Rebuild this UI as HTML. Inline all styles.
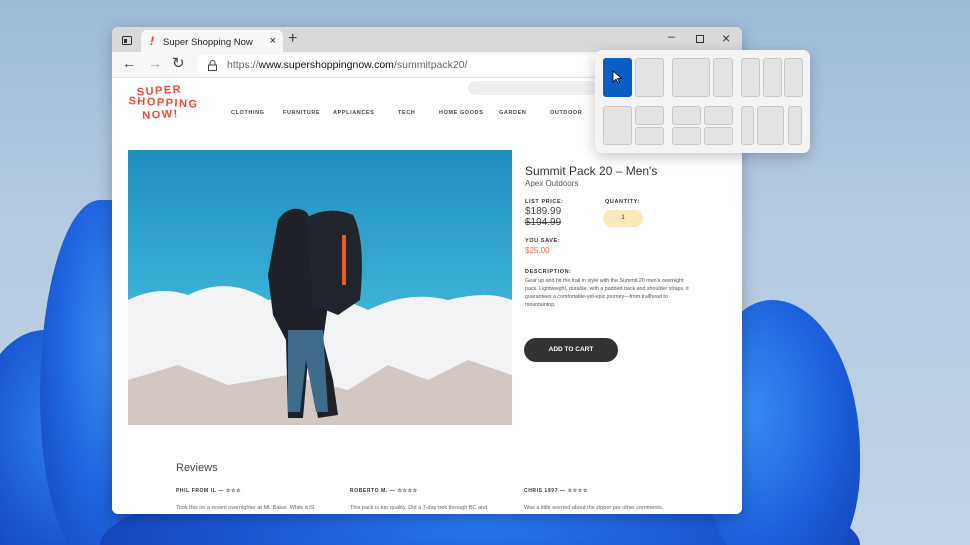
<!DOCTYPE html>
<html style="width:970px;height:545px;overflow:hidden"><head><style>
*{margin:0;padding:0;box-sizing:border-box}
body{width:970px;height:545px;overflow:hidden;position:relative;font-family:"Liberation Sans",sans-serif;
background:linear-gradient(180deg,#9fbbd8 0%,#b4cbe0 40%,#c1d3e4 100%)}
.abs{position:absolute}
.clip{position:absolute;left:0;top:0;width:970px;height:545px;overflow:hidden}
.bloomL{left:40px;top:200px;width:110px;height:360px;border-radius:60% 40% 30% 50%;background:radial-gradient(ellipse at 60% 40%,#3b8af0 0%,#1f64e0 50%,#1546b8 100%)}
.bloomL2{left:-30px;top:330px;width:150px;height:240px;border-radius:50%;background:radial-gradient(ellipse at 60% 40%,#2f7ef0 0%,#1a55d0 60%,#0f3aa8 100%)}
.bloomB{left:100px;top:470px;width:760px;height:150px;border-radius:50%;background:radial-gradient(ellipse at 50% 30%,#2a7af0 0%,#1a55d0 50%,#0d35a0 100%)}
.bloomR{left:700px;top:300px;width:160px;height:280px;border-radius:45% 55% 40% 50%;background:radial-gradient(ellipse at 30% 40%,#3a8cf5 0%,#1d5fdc 55%,#1240b0 100%)}
.win{left:112px;top:27px;width:630px;height:487px;background:#fff;border-radius:6px;overflow:hidden;box-shadow:0 4px 16px rgba(0,0,0,.25)}
.tabbar{height:25px;background:#d9d9d9;position:relative}
.tab{position:absolute;left:29px;top:3px;width:142px;height:22px;background:#f7f7f7;border-radius:6px 6px 0 0;font-size:9.5px;color:#222;padding:7px 0 0 22px}
.addr{height:26px;background:#f7f7f7;position:relative;border-bottom:1px solid #e2e2e2}
.url{position:absolute;left:86px;top:3px;width:500px;height:20px;background:#fff;border-radius:4px;font-size:10.5px;color:#666;padding:4px 0 0 29px}
.nav{position:absolute;top:110px;font-size:5.5px;letter-spacing:.6px;color:#444;font-weight:bold}
.snap{left:595px;top:50px;width:215px;height:103px;background:#f3f3f3;border-radius:7px;box-shadow:0 4px 14px rgba(0,0,0,.22)}
.c{position:absolute;background:#e3e3e3;border:1px solid #c8c8c8;border-radius:3px}
.lab{font-size:5.5px;font-weight:bold;letter-spacing:.6px;color:#333;position:absolute}
</style></head><body>
<div class="clip"><div class="abs bloomL2"></div><div class="abs bloomL"></div><div class="abs bloomB"></div><div class="abs bloomR"></div></div>
<div class="abs win">
 <div class="tabbar">
  <svg class="abs" style="left:10px;top:9px" width="10" height="9"><rect x=".5" y=".5" width="9" height="8" fill="none" stroke="#333" rx="1"/><rect x="2" y="3" width="3" height="4" fill="#333"/></svg>
  <div class="tab"><span style="position:absolute;left:9px;top:4px;color:#e8332a;font-weight:bold;font-size:12px;font-style:italic">!</span>Super Shopping Now<span style="position:absolute;right:7px;top:5px;font-size:11px">×</span></div>
  <div class="abs" style="left:176px;top:3px;font-size:16px;color:#444">+</div>
  <div class="abs" style="left:556px;top:2px;font-size:12px;color:#333">–</div>
  <div class="abs" style="left:584px;top:8px;width:8px;height:8px;border:1px solid #333"></div>
  <div class="abs" style="left:610px;top:3px;font-size:14px;color:#333">×</div>
 </div>
 <div class="addr">
  <div class="abs" style="left:10px;top:3px;font-size:14px;color:#333">←</div>
  <div class="abs" style="left:36px;top:3px;font-size:14px;color:#999">→</div>
  <div class="abs" style="left:60px;top:2px;font-size:15px;color:#444">↻</div>
  <div class="url"><svg class="abs" style="left:10px;top:5px" width="9" height="11"><path d="M2 5V3a2.5 2.5 0 0 1 5 0v2" fill="none" stroke="#444"/><rect x=".5" y="5" width="8" height="5.5" fill="none" stroke="#444"/></svg>https://<span style="color:#111">www.supershoppingnow.com</span>/summitpack20/</div>
 </div>
</div>
<div class="abs" style="left:468px;top:81px;width:140px;height:14px;background:#eee;border-radius:7px"></div>
<div class="abs" style="left:126px;top:85px;width:75px;font-weight:bold;color:#ec4a35;font-size:11px;line-height:12px;letter-spacing:1.5px;text-align:center">
 <div style="transform:rotate(-4deg);margin-left:-8px">SUPER</div><div style="transform:rotate(3deg)">SHOPPING</div><div style="transform:rotate(-3deg);margin-left:-6px">NOW!</div></div>
<div class="nav" style="left:231px">CLOTHING</div><div class="nav" style="left:283px">FURNITURE</div><div class="nav" style="left:333px">APPLIANCES</div><div class="nav" style="left:398px">TECH</div><div class="nav" style="left:439px">HOME GOODS</div><div class="nav" style="left:499px">GARDEN</div><div class="nav" style="left:550px">OUTDOOR</div>
<svg class="abs" style="left:128px;top:150px" width="384" height="275">
 <defs><linearGradient id="sky" x1="0" y1="0" x2="0" y2="1"><stop offset="0" stop-color="#1f8fc0"/><stop offset=".6" stop-color="#3fb3d8"/><stop offset="1" stop-color="#80cbe4"/></linearGradient></defs>
 <rect width="384" height="275" fill="url(#sky)"/>
 <path d="M0 150 Q30 135 60 145 Q100 125 140 150 Q200 140 240 160 Q280 140 320 150 Q360 140 384 150 V275 H0Z" fill="#f2f3f5"/>
 <path d="M0 230 L50 215 L100 235 L160 225 L220 240 L260 215 L300 230 L340 210 L384 225 V275 H0Z" fill="#c9bcb5" opacity=".8"/>
 <path d="M150 70 Q160 55 175 60 Q185 65 180 80 L195 80 L205 120 L195 190 L205 230 L210 265 L190 268 L180 210 L175 268 L160 268 L158 190 L145 165 L140 125 Z" fill="#1e2228"/>
 <path d="M160 180 L195 180 L200 262 L188 262 L178 210 L172 262 L160 262 Z" fill="#3f6c8a"/>
 <path d="M178 68 Q200 55 225 65 Q238 90 232 150 L210 165 L185 155 Z" fill="#20242c"/>
 <rect x="214" y="85" width="4" height="50" fill="#e8601c"/>
</svg>
<div class="abs" style="left:525px;top:164px;font-size:12px;color:#333">Summit Pack 20 – Men's</div>
<div class="abs" style="left:525px;top:179px;font-size:8px;color:#555">Apex Outdoors</div>
<div class="lab" style="left:525px;top:199px">LIST PRICE:</div>
<div class="abs" style="left:525px;top:206px;font-size:10px;color:#444">$189.99</div>
<div class="abs" style="left:525px;top:217px;font-size:10px;color:#444;text-decoration:line-through">$194.99</div>
<div class="lab" style="left:605px;top:199px">QUANTITY:</div>
<div class="abs" style="left:603px;top:210px;width:40px;height:17px;background:#fce7b8;border-radius:9px;font-size:6px;text-align:center;padding-top:5px;color:#333">1</div>
<div class="lab" style="left:525px;top:238px">YOU SAVE:</div>
<div class="abs" style="left:525px;top:246px;font-size:8px;color:#f06a4a">$25.00</div>
<div class="lab" style="left:525px;top:269px">DESCRIPTION:</div>
<div class="abs" style="left:525px;top:277px;width:165px;font-size:5.3px;line-height:8px;color:#555">Gear up and hit the trail in style with the Summit 20 men's overnight pack. Lightweight, durable, with a padded back and shoulder straps, it guarantees a comfortable-yet-epic journey—from trailhead to mountaintop.</div>
<div class="abs" style="left:524px;top:338px;width:94px;height:24px;background:#333;border-radius:12px;color:#fff;font-size:6.5px;font-weight:bold;text-align:center;padding-top:8px">ADD TO CART</div>
<div class="abs" style="left:176px;top:462px;font-size:11px;color:#444">Reviews</div>
<div class="lab" style="left:176px;top:488px;font-size:5px">PHIL FROM IL — ☆☆☆</div>
<div class="lab" style="left:350px;top:488px;font-size:5px">ROBERTO M. — ☆☆☆☆</div>
<div class="lab" style="left:524px;top:488px;font-size:5px">CHRIS 1997 — ☆☆☆☆</div>
<div class="abs" style="left:176px;top:505px;font-size:5.5px;color:#666">Took this on a recent overnighter at Mt. Baker. While it IS</div>
<div class="abs" style="left:350px;top:505px;font-size:5.5px;color:#666">This pack is top quality. Did a 7-day trek through BC and</div>
<div class="abs" style="left:524px;top:505px;font-size:5.5px;color:#666">Was a little worried about the zipper per other comments,</div>
<div class="abs snap">
 <div class="c" style="left:8px;top:8px;width:29px;height:39px;background:#0a5fc4;border-color:#0a5fc4"></div>
 <svg class="abs" style="left:17px;top:20px" width="10" height="14"><path d="M1 1V12L4 9L6 13L7.5 12.3L5.6 8.5H9.5Z" fill="#fff" stroke="#000" stroke-width=".8"/></svg>
 <div class="c" style="left:40px;top:8px;width:29px;height:39px"></div>
 <div class="c" style="left:77px;top:8px;width:38px;height:39px"></div>
 <div class="c" style="left:118px;top:8px;width:20px;height:39px"></div>
 <div class="c" style="left:146px;top:8px;width:19px;height:39px"></div>
 <div class="c" style="left:168px;top:8px;width:19px;height:39px"></div>
 <div class="c" style="left:189px;top:8px;width:19px;height:39px"></div>
 <div class="c" style="left:8px;top:56px;width:29px;height:39px"></div>
 <div class="c" style="left:40px;top:56px;width:29px;height:19px"></div>
 <div class="c" style="left:40px;top:77px;width:29px;height:18px"></div>
 <div class="c" style="left:77px;top:56px;width:29px;height:19px"></div>
 <div class="c" style="left:109px;top:56px;width:29px;height:19px"></div>
 <div class="c" style="left:77px;top:77px;width:29px;height:18px"></div>
 <div class="c" style="left:109px;top:77px;width:29px;height:18px"></div>
 <div class="c" style="left:146px;top:56px;width:13px;height:39px"></div>
 <div class="c" style="left:162px;top:56px;width:27px;height:39px"></div>
 <div class="c" style="left:193px;top:56px;width:14px;height:39px"></div>
</div>
</body></html>
